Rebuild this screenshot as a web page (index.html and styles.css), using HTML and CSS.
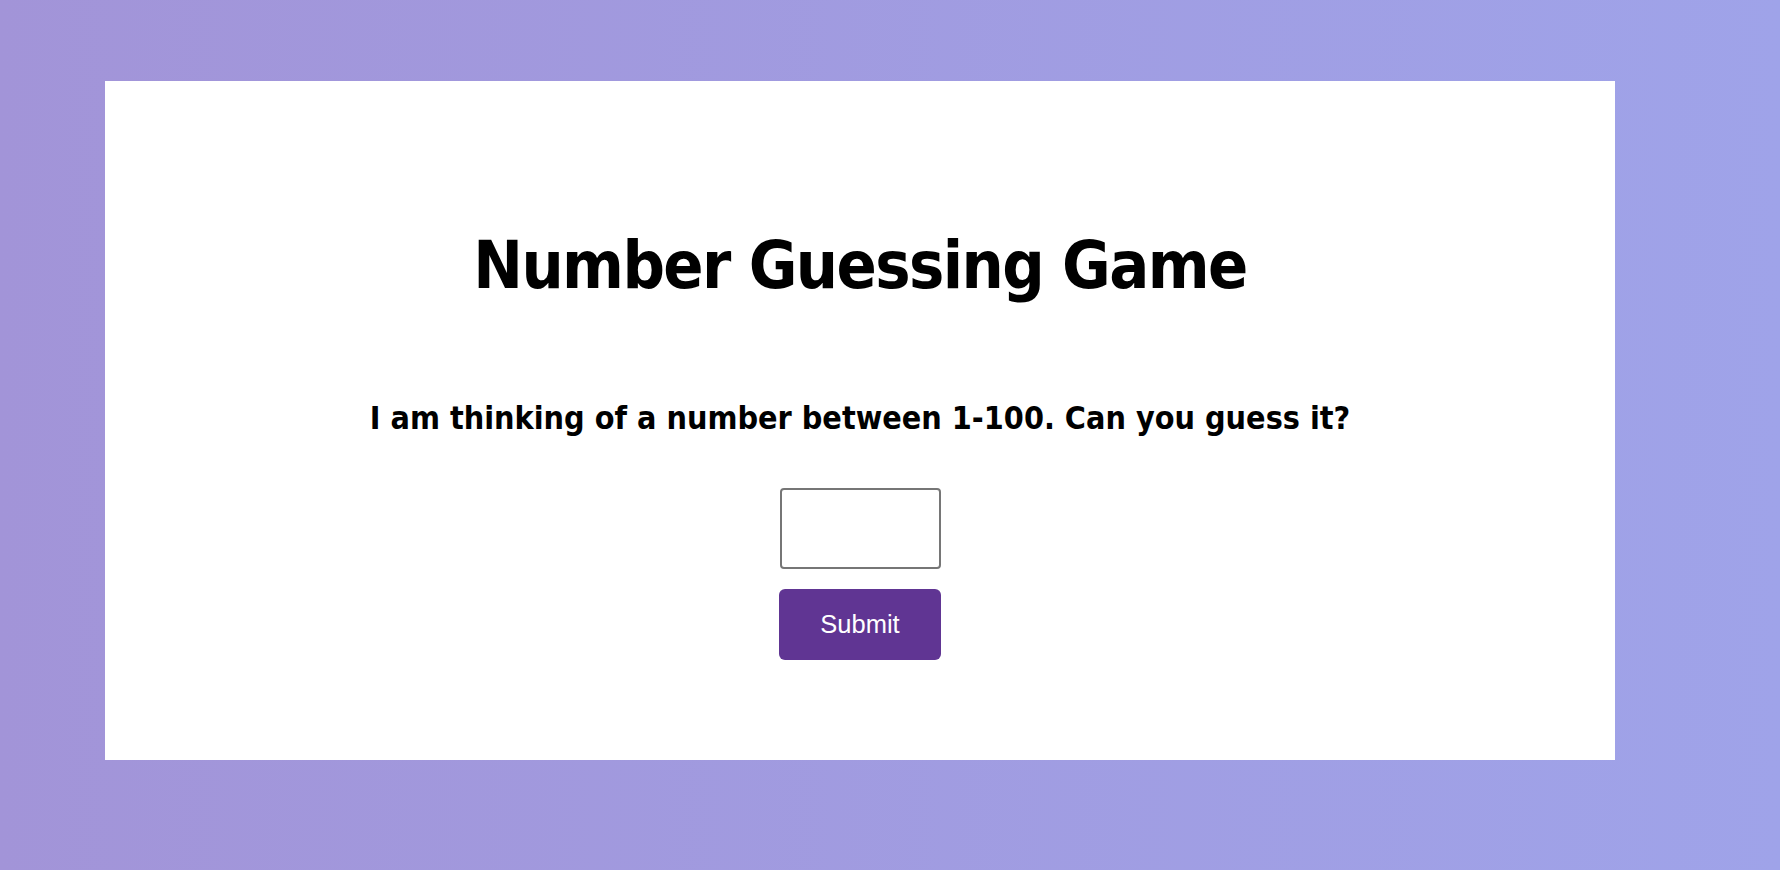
FILE: index.html
```html
<!DOCTYPE html>
<html lang="en">
<head>
<meta charset="utf-8">
<title>Number Guessing Game</title>
<link rel="stylesheet" href="styles.css">
</head>
<body>
<main class="card">
  <h1 class="title">Number Guessing Game</h1>
  <p class="prompt">I am thinking of a number between 1-100. Can you guess it?</p>
  <form class="guess-form" onsubmit="return false;">
    <input class="guess-input" type="text" aria-label="Your guess">
    <button class="submit-btn" type="submit">Submit</button>
  </form>
</main>
</body>
</html>
```
FILE: styles.css
```css
html, body {
  margin: 0;
  padding: 0;
  height: 100%;
}
body {
  background: linear-gradient(to right, #a294d8, #9fa3e9);
  font-family: "DejaVu Sans Condensed", "DejaVu Sans", Verdana, sans-serif;
  padding: 81px 165px 0 105px;
  box-sizing: border-box;
}
.card {
  background: #fff;
  height: 679px;
  display: flex;
  flex-direction: column;
  align-items: center;
  box-sizing: border-box;
  padding-top: 150px;
}
.title {
  margin: 0;
  font-size: 66px;
  font-weight: bold;
  line-height: 70px;
  letter-spacing: -1.6px;
  color: #000;
}
.prompt {
  margin: 99px 0 0;
  font-size: 32px;
  font-weight: bold;
  line-height: 36px;
  letter-spacing: 0;
  color: #000;
}
.guess-form {
  display: flex;
  flex-direction: column;
  align-items: center;
  gap: 20px;
  margin-top: 52px;
}
.guess-input {
  width: 161px;
  height: 81px;
  box-sizing: border-box;
  border: 2px solid #767676;
  border-radius: 4px;
  font-size: 24px;
  padding: 0 8px;
}
.submit-btn {
  width: 162px;
  height: 71px;
  background: #603593;
  color: #fff;
  border: none;
  border-radius: 6px;
  font-family: "Liberation Sans", Arial, sans-serif;
  font-size: 25.5px;
  cursor: pointer;
}
```
